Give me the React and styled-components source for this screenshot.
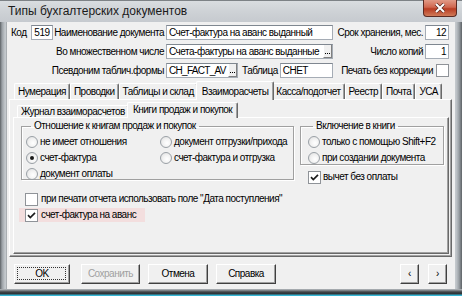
import React from "react";
import styled, { createGlobalStyle } from "styled-components";

const FONT = `"Liberation Sans", Arial, sans-serif`;
const LS = "-0.5px";

const Global = createGlobalStyle`
  html, body { margin: 0; padding: 0; background: #fff; }
  body { font-family: ${FONT}; font-size: 10px; line-height: 12px; color: #000; letter-spacing: ${LS}; }
  * { box-sizing: border-box; }
`;

const Window = styled.div`
  width: 462px;
  height: 296px;
  display: flex;
  flex-direction: column;
  background: linear-gradient(90deg, #5d6266 0, #9aa0a5 2px, #c3c8cc 5px, #c3c8cc 456px, #9aa0a5 459px, #5d6266 462px);
  overflow: hidden;
`;

const TitleBar = styled.div`
  height: 24px;
  display: flex;
  align-items: flex-start;
  padding-left: 8px;
  padding-right: 5px;
  background: linear-gradient(180deg, #d9dde0 0, #ced2d6 50%, #c6cacf 100%);
  border-top: 1px solid #7d8286;
`;

const Title = styled.div`
  font-size: 12px;
  line-height: 21px;
  letter-spacing: 0;
  color: #1a1a1a;
`;

const CloseButton = styled.div`
  margin-left: auto;
  width: 34px;
  height: 17px;
  margin-top: -1px;
  border: 1px solid #5b2a22;
  border-top: none;
  border-radius: 0 0 4px 4px;
  background: linear-gradient(180deg, #e19a86 0, #d0674f 45%, #b83c22 55%, #d07a58 100%);
  display: flex;
  align-items: center;
  justify-content: center;
`;

const Client = styled.div`
  flex: 1;
  margin: 0 7px 0 6px;
  background: #f0f0f0;
  display: flex;
  flex-direction: column;
  border-left: 1px solid #a9aeb2;
`;

const BottomFrame = styled.div`
  height: 7px;
  background: linear-gradient(180deg, #b9bec2 0, #3e4347 3px, #2b3034 5px, #38b6d4 6px, #38b6d4 7px);
`;

const Header = styled.div`
  display: grid;
  grid-template-columns: 45px 107px 167px 88px 24px;
  grid-auto-rows: 15px;
  column-gap: 2px;
  row-gap: 4px;
  padding: 3px 0 0 3px;
  align-items: center;
`;

const Cell = styled.div`
  display: flex;
  align-items: center;
  height: 15px;
  min-width: 0;
  gap: ${(p) => p.$gap || 0}px;
  justify-content: ${(p) => (p.$right ? "flex-end" : "flex-start")};
  grid-column: ${(p) => p.$span || "auto"};
  white-space: nowrap;
`;

const Label = styled.span`
  white-space: nowrap;
  padding: ${(p) => p.$pad || "0"};
`;

const Input = styled.div`
  height: 15px;
  width: ${(p) => (p.$w ? `${p.$w}px` : "100%")};
  flex: ${(p) => (p.$w ? "none" : "1")};
  min-width: 0;
  background: #fff;
  border: 1px solid #a5acb5;
  border-top-color: #7f8790;
  display: flex;
  align-items: center;
  justify-content: ${(p) => (p.$num ? "flex-end" : "flex-start")};
  padding: 0 2px;
  line-height: 13px;
  overflow: hidden;
  white-space: nowrap;
`;

const InputText = styled.span`
  flex: 1;
  overflow: hidden;
  letter-spacing: ${(p) => p.$ls || LS};
`;

const DotsButton = styled.span`
  width: 9px;
  height: 13px;
  margin-right: -2px;
  background: #f0f0f0;
  border-left: 1px solid #fff;
  border-right: 1px solid #808080;
  border-bottom: 1px solid #808080;
  display: flex;
  align-items: flex-end;
  justify-content: center;
  padding-bottom: 3px;
  flex: none;
`;

const CheckBoxBox = styled.span`
  width: 13px;
  height: 13px;
  flex: none;
  background: #fff;
  border: 1px solid #8f9398;
  display: flex;
  align-items: center;
  justify-content: center;
`;

const TabStrip = styled.div`
  display: flex;
  align-items: flex-end;
  padding-left: ${(p) => p.$pad}px;
  margin-top: ${(p) => p.$mt}px;
  height: ${(p) => p.$h}px;
  position: relative;
  z-index: 1;
`;

const Tab = styled.div`
  height: ${(p) => (p.$active ? p.$ah : p.$h)}px;
  padding: ${(p) => (p.$active ? p.$apt : 0)}px ${(p) => (p.$active ? 5 : 3)}px 0;
  margin: 0 ${(p) => (p.$active ? -2 : 0)}px ${(p) => (p.$active ? -1 : 0)}px;
  background: #f0f0f0;
  border-top: 1px solid #fff;
  border-left: 1px solid #fff;
  border-right: 1px solid #696969;
  box-shadow: inset -1px 0 0 #a0a0a0;
  border-radius: 2px 2px 0 0;
  display: flex;
  align-items: ${(p) => (p.$active ? "flex-start" : "center")};
  white-space: nowrap;
  position: relative;
  z-index: ${(p) => (p.$active ? 2 : 1)};
`;

const Panel = styled.div`
  margin: ${(p) => p.$m};
  height: ${(p) => p.$h}px;
  border-top: 1px solid #fff;
  border-left: 1px solid #fff;
  border-right: 1px solid #696969;
  border-bottom: 1px solid #696969;
  box-shadow: inset -1px -1px 0 #a0a0a0;
  display: flex;
  flex-direction: column;
  padding: ${(p) => p.$pad || "0"};
`;

const TopSection = styled.div`
  display: flex;
  gap: 6px;
  align-items: flex-start;
`;

const Group = styled.fieldset`
  margin: 0;
  width: ${(p) => p.$w}px;
  height: ${(p) => p.$h}px;
  border: 1px solid #a0a0a0;
  box-shadow: inset 1px 1px 0 #fff, 1px 1px 0 #fff;
  padding: 2px 0 0 ${(p) => p.$pl}px;
  display: grid;
  grid-template-columns: ${(p) => p.$cols};
  grid-auto-rows: ${(p) => p.$row}px;
  align-content: start;
`;

const Legend = styled.legend`
  padding: 0 3px;
  margin-left: 5px;
`;

const OptionRow = styled.div`
  display: flex;
  align-items: center;
  gap: ${(p) => p.$gap || 2}px;
  white-space: nowrap;
  height: ${(p) => p.$h || 16}px;
  padding-left: ${(p) => p.$pl || 0}px;
  margin-top: ${(p) => p.$mt || 0}px;
  margin-left: ${(p) => p.$ml || 0}px;
  width: ${(p) => (p.$w ? `${p.$w}px` : "auto")};
  background: ${(p) => p.$bg || "transparent"};
`;

const Radio = styled.span`
  width: 12px;
  height: 12px;
  flex: none;
  border-radius: 50%;
  border: 1px solid #9aa0a6;
  background: radial-gradient(circle at 60% 60%, #fff 0, #f4f4f4 40%, #dcdcdc 100%);
  display: flex;
  align-items: center;
  justify-content: center;
  &::after {
    content: "";
    width: 4px;
    height: 4px;
    border-radius: 50%;
    background: ${(p) => (p.$on ? "#1a1a1a" : "transparent")};
  }
`;

const RightColumn = styled.div`
  display: flex;
  flex-direction: column;
`;

const Footer = styled.div`
  display: flex;
  align-items: center;
  padding: 7px 8px 5px 7px;
`;

const Button = styled.div`
  width: ${(p) => p.$w}px;
  height: 20px;
  margin-left: ${(p) => p.$ml || 0}px;
  background: #f0f0f0;
  border-top: 1px solid #fff;
  border-left: 1px solid #fff;
  border-right: 1px solid #404040;
  border-bottom: 1px solid #404040;
  box-shadow: inset -1px -1px 0 #a0a0a0;
  display: flex;
  align-items: center;
  justify-content: center;
  color: ${(p) => (p.$disabled ? "#a0a0a0" : "#000")};
  position: relative;
  ${(p) =>
    p.$focus &&
    `&::after { content: ""; position: absolute; inset: 2px 3px 3px 2px; border: 1px dotted #333; }`}
`;

function Check({ on }) {
  return (
    <CheckBoxBox>
      {on && (
        <svg width="9" height="9" viewBox="0 0 9 9">
          <path d="M1 4.2 L3.3 6.5 L8 1.8" stroke="#1b1b1b" strokeWidth="1.7" fill="none" />
        </svg>
      )}
    </CheckBoxBox>
  );
}

function Dots() {
  return (
    <DotsButton>
      <svg width="5" height="1" viewBox="0 0 5 1">
        <rect x="0" y="0" width="1" height="1" fill="#000" />
        <rect x="2" y="0" width="1" height="1" fill="#000" />
        <rect x="4" y="0" width="1" height="1" fill="#000" />
      </svg>
    </DotsButton>
  );
}

const topTabs = ["Нумерация", "Проводки", "Таблицы и склад", "Взаиморасчеты", "Касса/подотчет", "Реестр", "Почта", "УСА"];

export default function App() {
  return (
    <>
      <Global />
      <Window>
        <TitleBar>
          <Title>Типы бухгалтерских документов</Title>
          <CloseButton>
            <svg width="12" height="10" viewBox="0 0 12 10">
              <path d="M2 1 L10 9 M10 1 L2 9" stroke="#5a2a20" strokeWidth="3.4" />
              <path d="M2 1 L10 9 M10 1 L2 9" stroke="#fff" strokeWidth="2" />
            </svg>
          </CloseButton>
        </TitleBar>
        <Client>
          <Header>
            <Cell $gap={4}>
              <Label $pad="0 0 0 1px">Код</Label>
              <Input $w={22} $num>519</Input>
            </Cell>
            <Cell $right>
              <Label>Наименование документа</Label>
            </Cell>
            <Cell>
              <Input>Счет-фактура на аванс выданный</Input>
            </Cell>
            <Cell $right>
              <Label>Срок хранения, мес.</Label>
            </Cell>
            <Cell>
              <Input $num>12</Input>
            </Cell>

            <Cell />
            <Cell $right>
              <Label>Во множественном числе</Label>
            </Cell>
            <Cell>
              <Input>
                <InputText>Счета-фактуры на аванс выданные</InputText>
                <Dots />
              </Input>
            </Cell>
            <Cell $right>
              <Label>Число копий</Label>
            </Cell>
            <Cell>
              <Input $num>1</Input>
            </Cell>

            <Cell />
            <Cell $right>
              <Label>Псевдоним таблич.формы</Label>
            </Cell>
            <Cell>
              <Input $w={72}>
                <InputText $ls="-0.7px">CH_FACT_AV</InputText>
                <Dots />
              </Input>
              <Label $pad="0 2px 0 4px">Таблица</Label>
              <Input>CHET</Input>
            </Cell>
            <Cell $span="4 / 6" $right $gap={3}>
              <Label>Печать без коррекции</Label>
              <Check />
            </Cell>
          </Header>

          <TabStrip $pad={7} $mt={2} $h={19}>
            {topTabs.map((t) => (
              <Tab key={t} $active={t === "Взаиморасчеты"} $h={16} $ah={19} $apt={4}>
                {t}
              </Tab>
            ))}
          </TabStrip>
          <Panel $m="0 3px 0 2px" $h={158} $pad="1px 2px 2px 3px">
            <TabStrip $pad={4} $mt={0} $h={16}>
              <Tab $h={12}>Журнал взаиморасчетов</Tab>
              <Tab $active $h={12} $ah={16} $apt={1}>Книги продаж и покупок</Tab>
            </TabStrip>
            <Panel $m="0" $h={137} $pad="2px 4px 0 7px">
              <TopSection>
                <Group $w={273} $h={60} $cols="134px 1fr" $row={16} $pl={4}>
                  <Legend>Отношение к книгам продаж и покупок</Legend>
                  <OptionRow>
                    <Radio />
                    не имеет отношения
                  </OptionRow>
                  <OptionRow>
                    <Radio />
                    документ отгрузки/прихода
                  </OptionRow>
                  <OptionRow>
                    <Radio $on />
                    счет-фактура
                  </OptionRow>
                  <OptionRow>
                    <Radio />
                    счет-фактура и отгрузка
                  </OptionRow>
                  <OptionRow>
                    <Radio />
                    документ оплаты
                  </OptionRow>
                </Group>
                <RightColumn>
                  <Group $w={144} $h={45} $cols="1fr" $row={16} $pl={7}>
                    <Legend>Включение в книги</Legend>
                    <OptionRow>
                      <Radio />
                      только с помощью Shift+F2
                    </OptionRow>
                    <OptionRow>
                      <Radio />
                      при создании документа
                    </OptionRow>
                  </Group>
                  <OptionRow $pl={8} $mt={4} $gap={2}>
                    <Check on />
                    вычет без оплаты
                  </OptionRow>
                </RightColumn>
              </TopSection>
              <OptionRow $pl={4} $mt={6} $gap={3}>
                <Check />
                при печати отчета использовать поле "Дата поступления"
              </OptionRow>
              <OptionRow $pl={6} $ml={-2} $mt={1} $gap={3} $w={126} $h={14} $bg="#f3dede">
                <Check on />
                счет-фактура на аванс
              </OptionRow>
            </Panel>
          </Panel>
          <Footer>
            <Button $w={56} $focus>OK</Button>
            <Button $w={59} $ml={11} $disabled>Сохранить</Button>
            <Button $w={60} $ml={8}>Отмена</Button>
            <Button $w={60} $ml={8}>Справка</Button>
            <Button $w={19} style={{ marginLeft: "auto" }}>&lsaquo;</Button>
            <Button $w={19} $ml={9}>&rsaquo;</Button>
          </Footer>
        </Client>
        <BottomFrame />
      </Window>
    </>
  );
}
